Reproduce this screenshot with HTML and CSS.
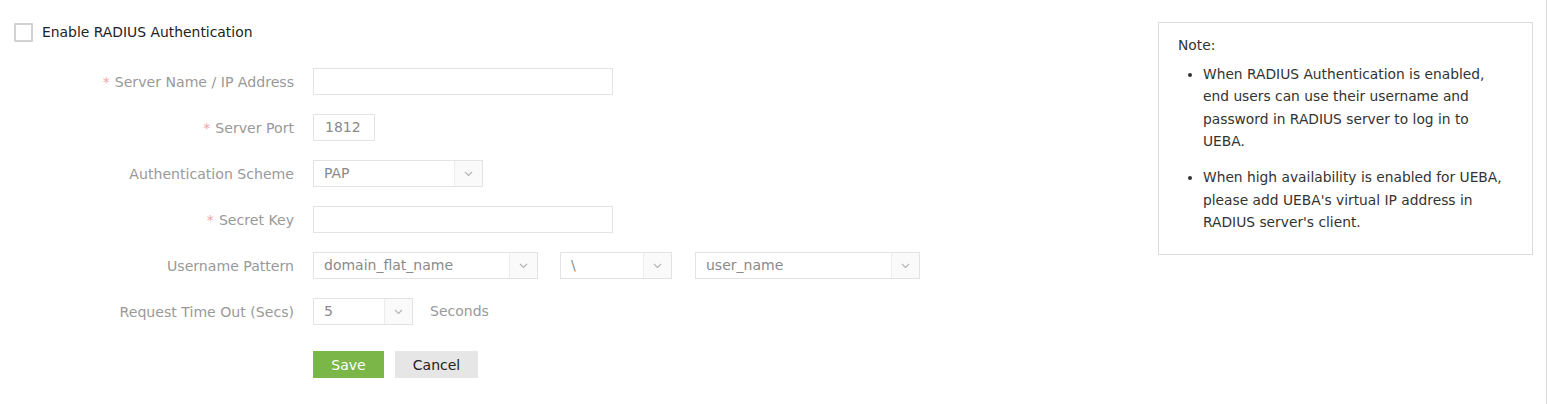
FILE: index.html
```html
<!DOCTYPE html>
<html lang="en">
<head>
<meta charset="utf-8">
<title>RADIUS Authentication</title>
<link rel="stylesheet" href="styles.css">
</head>
<body>
<div class="page">
  <div class="form-area">
    <label class="enable-row">
      <span class="checkbox"></span>
      <span class="enable-text">Enable RADIUS Authentication</span>
    </label>

    <div class="form-grid">
      <div class="lbl"><span class="req">*</span>Server Name / IP Address</div>
      <div class="ctl"><div class="input w-300"></div></div>

      <div class="lbl"><span class="req">*</span>Server Port</div>
      <div class="ctl"><div class="input w-62">1812</div></div>

      <div class="lbl">Authentication Scheme</div>
      <div class="ctl">
        <div class="select w-170"><span class="val">PAP</span><span class="arrow"><svg width="9" height="6" viewBox="0 0 9 6"><path d="M1 1l3.5 3.5L8 1" fill="none" stroke="#b5b5b5" stroke-width="1.2"/></svg></span></div>
      </div>

      <div class="lbl"><span class="req">*</span>Secret Key</div>
      <div class="ctl"><div class="input w-300"></div></div>

      <div class="lbl">Username Pattern</div>
      <div class="ctl pattern">
        <div class="select w-225"><span class="val">domain_flat_name</span><span class="arrow"><svg width="9" height="6" viewBox="0 0 9 6"><path d="M1 1l3.5 3.5L8 1" fill="none" stroke="#b5b5b5" stroke-width="1.2"/></svg></span></div>
        <div class="select w-112"><span class="val">\</span><span class="arrow"><svg width="9" height="6" viewBox="0 0 9 6"><path d="M1 1l3.5 3.5L8 1" fill="none" stroke="#b5b5b5" stroke-width="1.2"/></svg></span></div>
        <div class="select w-225"><span class="val">user_name</span><span class="arrow"><svg width="9" height="6" viewBox="0 0 9 6"><path d="M1 1l3.5 3.5L8 1" fill="none" stroke="#b5b5b5" stroke-width="1.2"/></svg></span></div>
      </div>

      <div class="lbl">Request Time Out (Secs)</div>
      <div class="ctl timeout">
        <div class="select w-100"><span class="val">5</span><span class="arrow"><svg width="9" height="6" viewBox="0 0 9 6"><path d="M1 1l3.5 3.5L8 1" fill="none" stroke="#b5b5b5" stroke-width="1.2"/></svg></span></div>
        <span class="unit">Seconds</span>
      </div>

      <div class="lbl btn-spacer"></div>
      <div class="ctl buttons">
        <button class="btn btn-save">Save</button>
        <button class="btn btn-cancel">Cancel</button>
      </div>
    </div>
  </div>

  <div class="note">
    <div class="note-title">Note:</div>
    <ul class="note-list">
      <li>When RADIUS Authentication is enabled, end users can use their username and password in RADIUS server to log in to UEBA.</li>
      <li>When high availability is enabled for UEBA, please add UEBA's virtual IP address in RADIUS server's client.</li>
    </ul>
  </div>
</div>
</body>
</html>
```

FILE: styles.css
```css
html, body {
  margin: 0;
  padding: 0;
  background: #ffffff;
}

body {
  font-family: "DejaVu Sans", Verdana, sans-serif;
  font-size: 14px;
  color: #333;
}

.page {
  width: 1546px;
  min-height: 404px;
  border-right: 1px solid #dcdcdc;
  display: flex;
  align-items: flex-start;
}

.form-area {
  flex: 1;
  padding-left: 14px;
  padding-top: 22px;
}

.enable-row {
  display: flex;
  align-items: center;
  height: 20px;
}

.checkbox {
  width: 15px;
  height: 15px;
  border: 2px solid #d2d2d2;
  border-radius: 1px;
  background: #fff;
}

.enable-text {
  margin-left: 9px;
  color: #222;
  font-size: 13.9px;
}

.form-grid {
  display: grid;
  grid-template-columns: 280px auto;
  column-gap: 19px;
  row-gap: 19px;
  margin-top: 26px;
}

.lbl {
  height: 27px;
  display: flex;
  align-items: center;
  justify-content: flex-end;
  color: #999;
  white-space: nowrap;
  font-size: 14.1px;
}

.req {
  color: #f0a5a5;
  margin-right: 5px;
}

.ctl {
  display: flex;
  align-items: center;
  height: 27px;
}

.input, .select {
  height: 27px;
  box-sizing: border-box;
  border: 1px solid #e3e3e3;
  background: #fff;
  color: #8a8a8a;
  display: flex;
  align-items: center;
}

.input {
  padding-left: 11px;
  padding-bottom: 1px;
}

.select .val {
  flex: 1;
  padding-left: 10px;
  padding-bottom: 1px;
  white-space: nowrap;
  overflow: hidden;
}

.select .arrow {
  width: 27px;
  height: 100%;
  border-left: 1px solid #ececec;
  background: #fafafa;
  display: flex;
  align-items: center;
  justify-content: center;
}

.w-300 { width: 300px; }
.w-62 { width: 62px; }
.w-170 { width: 170px; }
.w-225 { width: 225px; }
.w-112 { width: 112px; }
.w-100 { width: 100px; }

.pattern {
  gap: 22px;
}

.pattern .select:nth-child(3) {
  margin-left: 1px;
}

.unit {
  margin-left: 17px;
  color: #999;
  padding-bottom: 2px;
}

.btn-spacer,
.buttons {
  margin-top: 7px;
}

.buttons {
  gap: 11px;
}

.btn {
  height: 27px;
  border: none;
  font-family: inherit;
  font-size: 14px;
  padding: 0;
  cursor: pointer;
}

.btn-save {
  width: 71px;
  background: #7ab648;
  color: #fff;
}

.btn-cancel {
  width: 83px;
  background: #e6e6e6;
  color: #222;
}

.note {
  width: 375px;
  box-sizing: border-box;
  margin-top: 22px;
  margin-right: 13px;
  border: 1px solid #dcdcdc;
  padding: 11px 19px 20px 19px;
  color: #333;
  font-size: 13.8px;
  line-height: 22.5px;
}

.note-list {
  margin: 6px 0 0 0;
  padding-left: 25px;
}

.note-list li + li {
  margin-top: 13.5px;
}
```
